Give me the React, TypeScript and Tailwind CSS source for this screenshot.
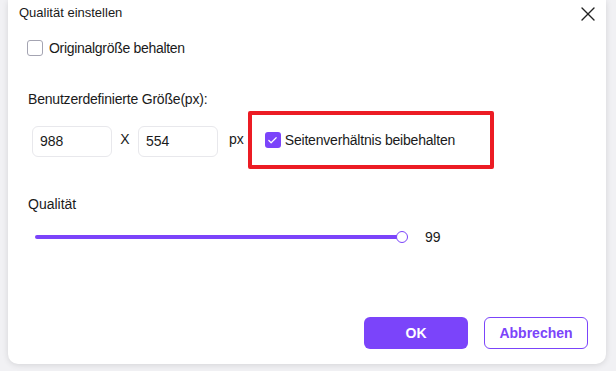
import { X, Check } from "lucide-react";

const font = { fontFamily: '"Liberation Sans", Arial, sans-serif' };

export default function App() {
  return (
    <div className="w-[616px] h-[371px] bg-[#f1f1f4] overflow-hidden" style={font}>
      <div className="ml-2 w-[598px] h-[364px] bg-white rounded-b-[10px] shadow-[0_1px_6px_rgba(0,0,0,0.12)] flex flex-col relative">
        {/* header */}
        <div className="flex items-start justify-between pl-[11px] pr-[6px] pt-[5px] h-[30px]">
          <span className="text-[13px] text-[#1a1a1a] leading-[16px]">Qualität einstellen</span>
          <X className="w-[24px] h-[24px] -mt-[3px] text-[#222]" strokeWidth={1.4} />
        </div>

        <label className="flex items-center gap-[6px] ml-[19px] mt-[9px] h-[18px]">
          <span className="w-[16px] h-[16px] rounded-[3px] border border-[#a4a4b2] bg-white" />
          <span className="text-[14px] text-[#1a1a1a] tracking-[-0.3px]">Originalgröße behalten</span>
        </label>

        <div className="ml-[20px] mt-[33px] text-[14px] text-[#1a1a1a] tracking-[-0.2px] leading-[18px]">
          Benutzerdefinierte Größe(px):
        </div>

        <div className="flex items-center ml-[24px] mt-[3px]">
          <div className="w-[80px] h-[31px] mt-[3px] rounded-[6px] border border-[#e8e8ec] flex items-center pl-[7px] text-[14px] text-[#1a1a1a]">
            988
          </div>
          <span className="w-[26px] text-center text-[14px] text-[#1a1a1a] -mt-[2px]">X</span>
          <div className="w-[80px] h-[31px] mt-[3px] rounded-[6px] border border-[#e8e8ec] flex items-center pl-[7px] text-[14px] text-[#1a1a1a]">
            554
          </div>
          <span className="ml-[11px] text-[14px] text-[#1a1a1a] -mt-[2px]">px</span>
          <div className="ml-[4px] w-[246px] h-[58px] border-[4px] border-[#ec1c24] rounded-[2px] flex items-center pl-[13px] gap-[4px]">
            <span className="w-[16px] h-[16px] rounded-[3px] bg-[#7b44fa] flex items-center justify-center">
              <Check className="w-[11px] h-[11px] text-white" strokeWidth={2.6} />
            </span>
            <span className="text-[14px] text-[#1a1a1a] tracking-[-0.2px]">Seitenverhältnis beibehalten</span>
          </div>
        </div>

        <div className="ml-[20px] mt-[26px] text-[14px] text-[#1a1a1a] leading-[18px]">Qualität</div>

        <div className="flex items-center ml-[27px] mt-[17px] h-[14px]">
          <div className="relative w-[374px] h-[14px] flex items-center">
            <div className="w-[366px] h-[4px] rounded-full bg-[#7b44fa]" />
            <div className="absolute left-[361px] top-[1px] w-[12px] h-[12px] rounded-full border-[1.5px] border-[#7b44fa] bg-white" />
          </div>
          <span className="ml-[16px] text-[14px] text-[#1a1a1a]">99</span>
        </div>

        <div className="flex justify-end gap-[16px] mt-auto mb-[15px] mr-[18px]">
          <button className="w-[104px] h-[32px] rounded-[6px] bg-[#7b44fa] text-white text-[14px] font-bold">OK</button>
          <button className="w-[104px] h-[32px] rounded-[6px] border border-[#7b44fa] text-[#7b44fa] text-[14px] font-bold bg-white">
            Abbrechen
          </button>
        </div>
      </div>
    </div>
  );
}
